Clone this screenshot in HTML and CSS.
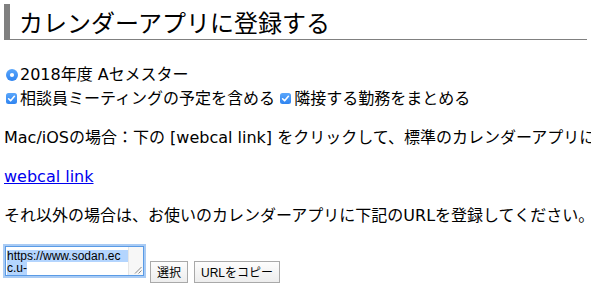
FILE: index.html
```html
<!DOCTYPE html>
<html lang="ja">
<head>
<meta charset="utf-8">
<title>カレンダーアプリに登録する</title>
<link rel="stylesheet" href="styles.css">
</head>
<body>
<h2 class="title">カレンダーアプリに登録する</h2>
<div class="options">
  <div class="opt-line">
    <label class="opt"><svg class="ico" width="12" height="12" viewBox="0 0 12 12"><defs><linearGradient id="rg" x1="0" y1="0" x2="0" y2="1"><stop offset="0" stop-color="#5aa6fb"/><stop offset="1" stop-color="#2f84f0"/></linearGradient></defs><circle cx="6" cy="6" r="6" fill="url(#rg)"/><circle cx="6" cy="6" r="2.1" fill="#fff"/></svg>2018年度 Aセメスター</label>
  </div>
  <div class="opt-line">
    <label class="opt"><svg class="ico ico-cb" width="11" height="11" viewBox="0 0 11 11"><rect x="0" y="0" width="11" height="11" rx="2.5" fill="url(#rg)"/><path d="M2.6 5.8 L4.6 7.8 L8.4 3.3" fill="none" stroke="#fff" stroke-width="1.6" stroke-linecap="round" stroke-linejoin="round"/></svg>相談員ミーティングの予定を含める</label>
    <label class="opt"><svg class="ico ico-cb" width="11" height="11" viewBox="0 0 11 11"><rect x="0" y="0" width="11" height="11" rx="2.5" fill="url(#rg)"/><path d="M2.6 5.8 L4.6 7.8 L8.4 3.3" fill="none" stroke="#fff" stroke-width="1.6" stroke-linecap="round" stroke-linejoin="round"/></svg>隣接する勤務をまとめる</label>
  </div>
</div>
<p class="para">Mac/iOSの場合：下の [webcal link] をクリックして、標準のカレンダーアプリに登録してください。</p>
<p class="para"><a class="link" href="#">webcal link</a></p>
<p class="para">それ以外の場合は、お使いのカレンダーアプリに下記のURLを登録してください。</p>
<div class="form-row">
  <div class="urlbox">
    <div class="urltext"><span class="sel sel-full">https://www.sodan.ec</span><span class="sel">c.u-</span></div>
    <div class="scroll"></div>
    <svg class="grip" width="9" height="9" viewBox="0 0 9 9"><path d="M8.5 2 L2 8.5 M8.5 5.5 L5.5 8.5" stroke="#888" stroke-width="1"/></svg>
  </div>
  <button class="btn" type="button">選択</button>
  <button class="btn" type="button">URLをコピー</button>
</div>
</body>
</html>
```
FILE: styles.css
```css
html, body {
  margin: 0;
  background: #fff;
}
body {
  padding: 4px;
  font-family: "DejaVu Sans", "Noto Sans CJK JP", sans-serif;
  font-size: 16px;
  color: #000;
  white-space: nowrap;
  overflow: hidden;
}
.title {
  margin: 0;
  height: 35px;
  line-height: 35px;
  font-family: "Noto Sans CJK JP", sans-serif;
  font-size: 24px;
  font-weight: normal;
  padding-left: 9px;
  border-left: 6px solid #808080;
  border-bottom: 1px solid #808080;
}
.options {
  margin-top: 23px;
}
.opt-line {
  line-height: 23px;
  padding-left: 2px;
}
.opt {
  display: inline-flex;
  align-items: center;
}
.ico {
  margin-right: 2px;
  flex: none;
}
.ico-cb {
  margin-right: 3px;
}
.para {
  margin: 16px 0 0;
  line-height: 23px;
}
.link {
  color: #0000ee;
}
.form-row {
  display: flex;
  align-items: flex-start;
  margin-top: 19px;
  padding-left: 1px;
}
.urlbox {
  position: relative;
  display: flex;
  width: 137px;
  height: 28px;
  border: 1px solid #5a9be6;
  box-shadow: 0 0 0 2px #a9cbf4;
  background: #fff;
  overflow: hidden;
}
.urltext {
  flex: 1;
  padding: 3px 0 0 1px;
  font-family: "Liberation Sans", sans-serif;
  font-size: 12px;
  line-height: 12.5px;
}
.sel {
  display: inline-block;
  vertical-align: top;
  background: #b4d5fe;
}
.sel-full {
  display: block;
}
.scroll {
  width: 14px;
  flex: none;
  background: #f7f7f7;
  border-left: 1px solid #e6e6e6;
}
.grip {
  position: absolute;
  right: 1px;
  bottom: 1px;
}
.btn {
  margin: 15px 0 0 6px;
  height: 22px;
  padding: 0 6px;
  font-family: "Liberation Sans", "Noto Sans CJK JP", sans-serif;
  font-size: 12px;
  color: #000;
  border: 1px solid #a9a9a9;
  border-radius: 0;
  background: linear-gradient(#fdfdfd, #ededed);
}
```
